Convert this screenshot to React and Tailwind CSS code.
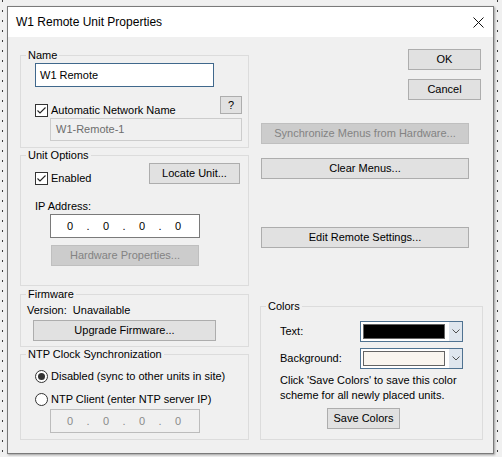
import React from "react";

// Win10-style dialog controls
function Button({ className = "", disabled = false, children }) {
  return (
    <button
      type="button"
      disabled={disabled}
      className={`h-[21px] flex items-center justify-center border text-[11px] leading-none ${
        disabled
          ? "bg-[#cccccc] border-[#bfbfbf] text-[#838383]"
          : "bg-[#e1e1e1] border-[#adadad] text-black"
      } ${className}`}
    >
      {children}
    </button>
  );
}

function Group({ title, className = "", children }) {
  return (
    <fieldset className={`border border-[#dcdcdc] ${className}`}>
      <legend className="ml-[5px] px-[2px] text-[11px] leading-[14px] text-black">{title}</legend>
      {children}
    </fieldset>
  );
}

function Checkbox({ label }) {
  return (
    <div className="flex items-center">
      <span className="w-[13px] h-[13px] border border-[#333333] bg-white flex items-center justify-center">
        <svg width="11" height="11" viewBox="0 0 11 11">
          <path d="M1.5 5.5L4 8L9.5 2.5" stroke="#222" fill="none" strokeWidth="1.1" />
        </svg>
      </span>
      <span className="ml-[3px] leading-[14px]">{label}</span>
    </div>
  );
}

function Radio({ checked, label, className = "" }) {
  return (
    <div className={`flex items-center ${className}`}>
      <span className="w-[13px] h-[13px] rounded-full border border-[#333333] bg-white flex items-center justify-center">
        {checked && <span className="w-[7px] h-[7px] rounded-full bg-[#333333]" />}
      </span>
      <span className="ml-[3px] leading-[14px]">{label}</span>
    </div>
  );
}

function IpBox({ disabled = false, className = "" }) {
  const parts = ["0", "0", "0", "0"];
  return (
    <div
      className={`w-[150px] h-[24px] border flex items-center pl-[4px] ${
        disabled ? "bg-[#f0f0f0] border-[#bcbcbc] text-[#8a8a8a]" : "bg-white border-[#7a7a7a] text-black"
      } ${className}`}
    >
      {parts.map((p, i) => (
        <React.Fragment key={i}>
          <span className="w-[30px] text-center">{p}</span>
          {i < 3 && <span className="w-[6px] text-center">.</span>}
        </React.Fragment>
      ))}
    </div>
  );
}

function ColorCombo({ swatch }) {
  return (
    <div className="w-[103px] h-[21px] border border-[#4f7291] bg-white flex">
      <div className={`flex-1 m-[2px] mr-[4px] border border-[#646464] ${swatch}`} />
      <div className="w-[13px] bg-[#dfe6ee] flex items-center justify-center">
        <svg width="8" height="5" viewBox="0 0 8 5">
          <polyline points="0.5,0.5 4,4 7.5,0.5" stroke="#505050" fill="none" strokeWidth="1" />
        </svg>
      </div>
    </div>
  );
}

function DottedGuide() {
  return <div className="w-[1px] h-full bg-[image:repeating-linear-gradient(to_bottom,#3a3a3a_0px,#3a3a3a_2px,transparent_2px,transparent_10px)]" />;
}

export default function App() {
  return (
    <div className="w-[502px] h-[457px] bg-[#f0f0f0] flex font-['Liberation_Sans',Arial,sans-serif] text-[11px] text-black">
      <div className="w-[7px] h-full pl-[2px]">
        <DottedGuide />
      </div>

      <div className="w-[487px] h-[448px] mt-[6px] border border-[#7a7a7a] shadow-[1px_1px_2px_rgba(0,0,0,0.35)] flex flex-col">
        {/* Title bar */}
        <div className="h-[30px] bg-white flex items-center justify-between pl-[8px] pr-[9px]">
          <span className="text-[12px]">W1 Remote Unit Properties</span>
          <svg width="11" height="11" viewBox="0 0 11 11">
            <path d="M0.5 0.5L10.5 10.5M10.5 0.5L0.5 10.5" stroke="#111" strokeWidth="1" />
          </svg>
        </div>

        <div className="flex-1 bg-[#f0f0f0] flex">
          {/* Left column */}
          <div className="w-[229px] ml-[12px] mt-[11px] flex flex-col">
            <Group title="Name">
              <div className="pl-[14px] pt-[1px] pb-[6px]">
                <div className="w-[179px] h-[24px] border border-[#40688c] bg-white flex items-center pl-[4px]">
                  W1 Remote
                </div>
                <div className="mt-[9px] h-[20px] flex items-start">
                  <div className="mt-[7px]">
                    <Checkbox label="Automatic Network Name" />
                  </div>
                  <Button className="ml-auto mr-[6px] w-[22px] !h-[18px]">?</Button>
                </div>
                <div className="ml-[15px] mt-[2px] w-[192px] h-[23px] border border-[#cccccc] bg-[#f0f0f0] text-[#6d6d6d] flex items-center pl-[5px]">
                  W1-Remote-1
                </div>
              </div>
            </Group>

            <Group title="Unit Options">
              <div className="pl-[14px] pt-[1px] pb-[19px]">
                <div className="flex items-start">
                  <div className="mt-[8px]">
                    <Checkbox label="Enabled" />
                  </div>
                  <Button className="ml-auto mr-[8px] w-[91px]">Locate Unit...</Button>
                </div>
                <div className="mt-[14px] leading-[14px]">IP Address:</div>
                <IpBox className="mt-[1px] ml-[15px]" />
                <Button disabled className="mt-[7px] ml-[16px] w-[148px]">Hardware Properties...</Button>
              </div>
            </Group>

            <Group title="Firmware" className="mt-[1px]">
              <div className="pl-[6px] pt-[2px] pb-[5px]">
                <div className="leading-[14px] whitespace-pre">Version:  Unavailable</div>
                <Button className="mt-[3px] ml-[6px] w-[183px]">Upgrade Firmware...</Button>
              </div>
            </Group>

            <Group title="NTP Clock Synchronization">
              <div className="pl-[14px] pt-[8px] pb-[6px]">
                <Radio checked label="Disabled (sync to other units in site)" />
                <Radio label="NTP Client (enter NTP server IP)" className="mt-[9px]" />
                <IpBox disabled className="mt-[3px] ml-[15px]" />
              </div>
            </Group>
          </div>

          {/* Right column */}
          <div className="w-[223px] ml-[11px] flex flex-col">
            <Button className="self-end mr-[2px] mt-[12px] w-[73px]">OK</Button>
            <Button className="self-end mr-[2px] mt-[9px] w-[73px]">Cancel</Button>
            <Button disabled className="ml-[1px] mt-[23px] w-[208px]">Synchronize Menus from Hardware...</Button>
            <Button className="ml-[1px] mt-[14px] w-[208px]">Clear Menus...</Button>
            <Button className="ml-[1px] mt-[48px] w-[208px]">Edit Remote Settings...</Button>

            <Group title="Colors" className="mt-[51px]">
              <div className="pl-[19px] pt-[8px] pb-[10px]">
                <div className="h-[21px] flex items-center">
                  <span className="w-[80px]">Text:</span>
                  <ColorCombo swatch="bg-black" />
                </div>
                <div className="h-[21px] mt-[6px] flex items-center">
                  <span className="w-[80px]">Background:</span>
                  <ColorCombo swatch="bg-[#f9f5ef]" />
                </div>
                <p className="mt-[4px] leading-[15px]">
                  Click 'Save Colors' to save this color
                  <br />
                  scheme for all newly placed units.
                </p>
                <Button className="mt-[5px] ml-[47px] w-[73px]">Save Colors</Button>
              </div>
            </Group>
          </div>
        </div>
      </div>

      <div className="w-[8px] h-full pl-[3px]">
        <DottedGuide />
      </div>
    </div>
  );
}
